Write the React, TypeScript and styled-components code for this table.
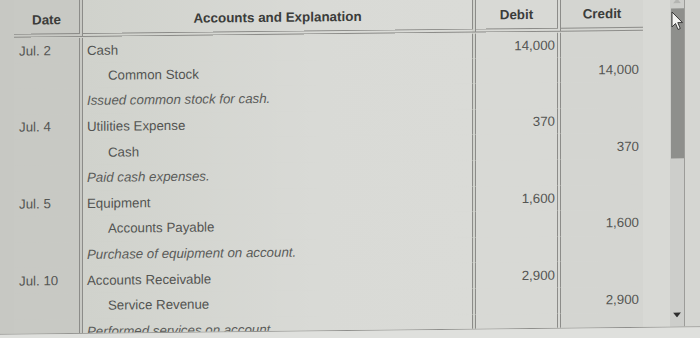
import React from "react";
import styled, { createGlobalStyle } from "styled-components";

const GlobalStyle = createGlobalStyle`
  html, body { margin: 0; padding: 0; background: #d3d4cf; }
  body { font-family: "Liberation Sans", Arial, sans-serif; }
`;

const Page = styled.div`
  position: relative;
  width: 700px;
  height: 338px;
  overflow: hidden;
  background: linear-gradient(90deg, #c6c7c2 0%, #d1d3cd 20%, #d9dad6 55%, #d6d7d3 100%);
`;

const Skewed = styled.div`
  margin-top: -4px;
  transform: skewY(-0.63deg);
  transform-origin: 350px 170px;
  display: flex;
  flex-direction: column;
`;

const Panel = styled.div`
  display: flex;
  height: 334px;
  border-bottom: 1px solid #8f8f8c;
`;

const LeftPad = styled.div`
  width: 14px;
  flex: none;
  background: #c7c8c3;
`;

const Table = styled.div`
  width: 629px;
  flex: none;
  display: grid;
  grid-template-columns: 69px 393px 85px 82px;
  grid-template-rows: 38px;
  grid-auto-rows: 25.6px;
  align-content: start;
  overflow: hidden;
`;

type Col = "date" | "acct" | "debit" | "credit";

const colBg: Record<Col, string> = {
  date: "#c8c9c4",
  acct: "linear-gradient(90deg, #d0d2cc 0%, #d9dad6 60%, #dadbd7 100%)",
  debit: "#d8d9d5",
  credit: "#d4d5d1",
};

const HeadCell = styled.div<{ $col: Col }>`
  display: flex;
  align-items: flex-end;
  justify-content: center;
  padding-bottom: 6px;
  box-sizing: border-box;
  font-weight: bold;
  font-size: 13.4px;
  color: #3b3c3a;
  background: ${(p) => colBg[p.$col]};
  border-bottom: 4px double #8c8c89;
  border-right: ${(p) => (p.$col === "credit" ? "none" : "4px double #8c8c89")};
`;

const Cell = styled.div<{ $col: Col; $first?: boolean }>`
  display: flex;
  align-items: center;
  box-sizing: border-box;
  font-size: 13.3px;
  color: #545553;
  white-space: nowrap;
  background: ${(p) => colBg[p.$col]};
  border-right: ${(p) => (p.$col === "credit" ? "none" : "4px double #8c8c89")};
  margin-top: ${(p) => (p.$first ? "1px" : "0")};
  justify-content: ${(p) => (p.$col === "debit" || p.$col === "credit" ? "flex-end" : "flex-start")};
  padding-left: ${(p) => (p.$col === "date" ? "5px" : p.$col === "acct" ? "4px" : "0")};
  padding-right: ${(p) => (p.$col === "debit" ? "2px" : p.$col === "credit" ? "4px" : "0")};
`;

const AcctText = styled.span<{ $kind: "debit" | "credit" | "note" }>`
  padding-left: ${(p) => (p.$kind === "credit" ? "21px" : "0")};
  font-style: ${(p) => (p.$kind === "note" ? "italic" : "normal")};
  color: ${(p) => (p.$kind === "note" ? "#5a5b59" : "#535452")};
`;

const Gutter = styled.div`
  width: 27px;
  flex: none;
  background: #d8d9d5;
`;

const ScrollTrack = styled.div`
  width: 14px;
  flex: none;
  display: flex;
  flex-direction: column;
  align-items: center;
  background: #cdcecb;
`;

const ArrowBox = styled.div<{ $h: number }>`
  height: ${(p) => p.$h}px;
  width: 100%;
  display: flex;
  align-items: center;
  justify-content: center;
`;

const Thumb = styled.div`
  width: 13px;
  height: 150px;
  background: #8e8f8c;
`;

const TrackFill = styled.div`
  flex: 1;
`;

const Edge = styled.div`
  flex: 1;
  border-left: 1px solid #9c9c99;
  background: #d5d6d2;
`;

const BottomStrip = styled.div`
  height: 20px;
  background: #dfe0dd;
`;

const Cursor = styled.svg`
  position: absolute;
  left: 671px;
  top: 11px;
`;

type Row = {
  date?: string;
  text: string;
  kind: "debit" | "credit" | "note";
  debit?: string;
  credit?: string;
};

const rows: Row[] = [
  { date: "Jul. 2", text: "Cash", kind: "debit", debit: "14,000" },
  { text: "Common Stock", kind: "credit", credit: "14,000" },
  { text: "Issued common stock for cash.", kind: "note" },
  { date: "Jul. 4", text: "Utilities Expense", kind: "debit", debit: "370" },
  { text: "Cash", kind: "credit", credit: "370" },
  { text: "Paid cash expenses.", kind: "note" },
  { date: "Jul. 5", text: "Equipment", kind: "debit", debit: "1,600" },
  { text: "Accounts Payable", kind: "credit", credit: "1,600" },
  { text: "Purchase of equipment on account.", kind: "note" },
  { date: "Jul. 10", text: "Accounts Receivable", kind: "debit", debit: "2,900" },
  { text: "Service Revenue", kind: "credit", credit: "2,900" },
  { text: "Performed services on account.", kind: "note" },
];

export default function App() {
  return (
    <>
      <GlobalStyle />
      <Page>
        <Skewed>
          <Panel>
            <LeftPad />
            <Table>
              <HeadCell $col="date">Date</HeadCell>
              <HeadCell $col="acct">Accounts and Explanation</HeadCell>
              <HeadCell $col="debit">Debit</HeadCell>
              <HeadCell $col="credit">Credit</HeadCell>
              {rows.map((r, i) => (
                <React.Fragment key={i}>
                  <Cell $col="date" $first={i === 0}>{r.date ?? ""}</Cell>
                  <Cell $col="acct" $first={i === 0}>
                    <AcctText $kind={r.kind}>{r.text}</AcctText>
                  </Cell>
                  <Cell $col="debit" $first={i === 0}>{r.debit ?? ""}</Cell>
                  <Cell $col="credit" $first={i === 0}>{r.credit ?? ""}</Cell>
                </React.Fragment>
              ))}
            </Table>
            <Gutter />
            <ScrollTrack>
              <ArrowBox $h={16}>
                <svg width="8" height="5" viewBox="0 0 8 5">
                  <path d="M0 5 L4 0 L8 5 Z" fill="#b4b5b2" />
                </svg>
              </ArrowBox>
              <Thumb />
              <TrackFill />
              <ArrowBox $h={24}>
                <svg width="8" height="5" viewBox="0 0 8 5">
                  <path d="M0 0 L8 0 L4 5 Z" fill="#2e2e2e" />
                </svg>
              </ArrowBox>
            </ScrollTrack>
            <Edge />
          </Panel>
          <BottomStrip />
        </Skewed>
        <Cursor width="13" height="20" viewBox="0 0 13 20">
          <path
            d="M1 1 L1 16 L4.5 12.5 L7 18.5 L9.3 17.5 L6.8 11.6 L11.5 11.6 Z"
            fill="#f4f4f2"
            stroke="#3a3a3a"
            strokeWidth="1"
            strokeLinejoin="round"
          />
        </Cursor>
      </Page>
    </>
  );
}
